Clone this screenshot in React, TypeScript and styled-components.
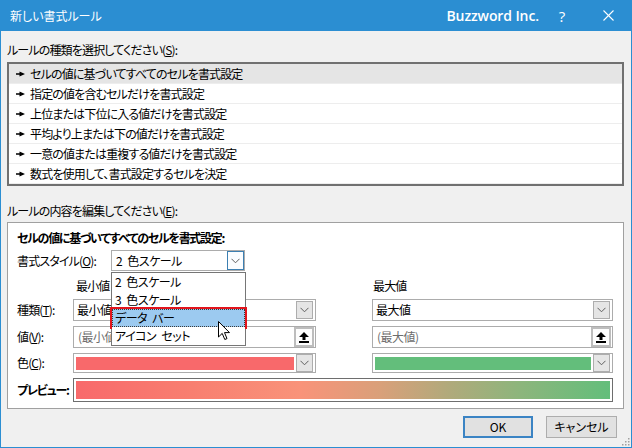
import React from "react";
import styled, { createGlobalStyle } from "styled-components";

const GlobalStyle = createGlobalStyle`
  html, body { margin: 0; padding: 0; background: #f0f0f0; }
  body {
    font-family: "Noto Sans CJK JP", "Noto Sans", sans-serif;
    font-size: 12px;
    letter-spacing: -0.85px;
    color: #000;
    font-feature-settings: "palt";
  }
  * { box-sizing: border-box; }
`;

const BLUE = "#2b8ed2";

const Window = styled.div`
  position: relative;
  width: 632px;
  height: 448px;
  background: #f0f0f0;
  border: 1px solid ${BLUE};
  border-top: none;
  display: flex;
  flex-direction: column;
  overflow: hidden;
`;

const TitleBar = styled.div`
  height: 31px;
  flex: none;
  background: ${BLUE};
  display: flex;
  align-items: center;
  padding-left: 9px;
  color: #fff;
`;

const TitleText = styled.span`
  font-size: 12px;
  line-height: 16px;
  letter-spacing: 0;
`;

const Brand = styled.span`
  margin-left: auto;
  font-family: "Open Sans", "Noto Sans", sans-serif;
  font-size: 14px;
  font-weight: 600;
  letter-spacing: -0.1px;
  line-height: 18px;
`;

const CaptionButton = styled.div`
  width: 46px;
  height: 31px;
  display: flex;
  align-items: center;
  justify-content: center;
  font-family: "Open Sans", "Noto Sans", sans-serif;
  font-size: 15px;
  letter-spacing: 0;
  color: #fff;
`;

const Body = styled.div`
  flex: 1;
  display: flex;
  flex-direction: column;
  padding: 11px 7px 0 6px;
`;

const SectionLabel = styled.div<{ $top?: number }>`
  height: 16px;
  line-height: 16px;
  margin-top: ${(p) => p.$top ?? 0}px;
`;

const ListBox = styled.div`
  margin-top: 4px;
  border: 2px solid #707070;
  background: #fff;
  display: flex;
  flex-direction: column;
`;

const ListItem = styled.div<{ $selected?: boolean }>`
  height: 20px;
  display: flex;
  align-items: center;
  gap: 5px;
  padding-left: 7px;
  border-bottom: 1px solid #ededed;
  background: ${(p) => (p.$selected ? "#e5e5e5" : "#fff")};
  line-height: 16px;
`;

const GroupBox = styled.div`
  margin-top: 3px;
  border: 1px solid #a0a0a0;
  background: #fff;
  padding: 7px 10px 6px 9px;
  display: flex;
  flex-direction: column;
`;

const Heading = styled.div`
  height: 16px;
  line-height: 16px;
  font-weight: 700;
  letter-spacing: -1.3px;
`;

const StyleRow = styled.div`
  margin-top: 4px;
  height: 21px;
  display: flex;
  align-items: center;
`;

const RowLabel = styled.span<{ $w: number; $bold?: boolean }>`
  width: ${(p) => p.$w}px;
  flex: none;
  line-height: 16px;
  white-space: nowrap;
  font-weight: ${(p) => (p.$bold ? 700 : 400)};
  letter-spacing: ${(p) => (p.$bold ? "-1.2px" : "inherit")};
`;

const FieldGrid = styled.div`
  margin-top: 7px;
  display: grid;
  grid-template-columns: 56px 243px 56px 241px;
  grid-template-rows: 16px 22px 22px 20px 24px;
  row-gap: 5px;
  align-items: center;
`;

const ColHead = styled.span<{ $col: number }>`
  grid-column: ${(p) => p.$col};
  padding-left: ${(p) => (p.$col === 2 ? 3 : 1)}px;
  line-height: 16px;
`;

const Combo = styled.div<{ $w?: number; $h: number }>`
  position: relative;
  width: ${(p) => (p.$w ? `${p.$w}px` : "auto")};
  height: ${(p) => p.$h}px;
  border: 1px solid #acacac;
  background: #fff;
  display: flex;
  align-items: center;
`;

const ComboText = styled.span<{ $muted?: boolean; $pad?: number }>`
  flex: 1;
  padding-left: ${(p) => p.$pad ?? 3}px;
  line-height: 16px;
  letter-spacing: -0.5px;
  word-spacing: 3px;
  color: ${(p) => (p.$muted ? "#6d6d6d" : "#000")};
  white-space: pre;
  overflow: hidden;
`;

const DropButton = styled.div<{ $focused?: boolean }>`
  flex: none;
  width: 17px;
  height: ${(p) => (p.$focused ? "100%" : "18px")};
  margin-right: ${(p) => (p.$focused ? 0 : 2)}px;
  border: 1px solid ${(p) => (p.$focused ? "#3c7fb1" : "#adadad")};
  background: ${(p) => (p.$focused ? "#fbfdff" : "#e5e5e5")};
  display: flex;
  align-items: center;
  justify-content: center;
`;

const RefButton = styled.div`
  flex: none;
  width: 20px;
  height: 20px;
  margin-right: 1px;
  border: 2px solid #bdbdbd;
  background: #fdfdfd;
  display: flex;
  align-items: center;
  justify-content: center;
`;

const ColorFill = styled.div<{ $color: string }>`
  flex: 1;
  height: 13px;
  margin: 0 2px 0 2px;
  background: ${(p) => p.$color};
`;

const PreviewBox = styled.div`
  grid-column: 2 / 5;
  height: 24px;
  border: 1px solid #6e6e6e;
  padding: 2px;
  background: #fff;
`;

const PreviewBar = styled.div`
  height: 100%;
  background: linear-gradient(
    to right,
    #f8696b 0%,
    #f87f70 22%,
    #f9937a 42%,
    #d9a07a 57%,
    #b0aa7b 70%,
    #8db57c 83%,
    #63be7b 100%
  );
`;

const DropList = styled.div`
  position: absolute;
  top: calc(100% + 2px);
  left: -1px;
  width: 135px;
  border: 1px solid #767676;
  background: #fff;
  z-index: 5;
  display: flex;
  flex-direction: column;
`;

const DropItem = styled.div<{ $hot?: boolean }>`
  position: relative;
  height: 18px;
  display: flex;
  align-items: center;
  padding-left: 2px;
  line-height: 16px;
  letter-spacing: -0.5px;
  word-spacing: 3px;
  white-space: pre;
  background: ${(p) => (p.$hot ? "#9ccaf0" : "#fff")};
  border: 1px ${(p) => (p.$hot ? "dotted #3a3a3a" : "solid transparent")};
  outline: ${(p) => (p.$hot ? "2px solid #e2141c" : "none")};
  outline-offset: 0;
`;

const Cursor = styled.svg`
  position: absolute;
  left: 106px;
  top: 48px;
  z-index: 6;
`;

const ButtonRow = styled.div`
  margin-top: 7px;
  display: flex;
  justify-content: flex-end;
  gap: 13px;
  padding-right: 7px;
`;

const DialogButton = styled.div<{ $default?: boolean; $w: number }>`
  width: ${(p) => p.$w}px;
  height: 22px;
  display: flex;
  align-items: center;
  justify-content: center;
  background: #e1e1e1;
  border: ${(p) => (p.$default ? "2px solid #3b84c4" : "1px solid #adadad")};
  line-height: 16px;
  letter-spacing: 0;
`;

const Grip = styled.svg`
  position: absolute;
  right: 1px;
  bottom: 1px;
`;

const Chevron = () => (
  <svg width="9" height="6" viewBox="0 0 9 6">
    <polyline points="0.5,0.8 4.5,4.8 8.5,0.8" fill="none" stroke="#5f5f5f" strokeWidth="1" />
  </svg>
);

const UpArrow = () => (
  <svg width="10" height="11" viewBox="0 0 10 11">
    <polygon points="5,0 10,5 6.5,5 6.5,8 3.5,8 3.5,5 0,5" fill="#000" />
    <rect x="0" y="9" width="10" height="2" fill="#000" />
  </svg>
);

const Pointer = () => (
  <svg width="9" height="6" viewBox="0 0 9 6">
    <polygon points="0,2.2 3.5,2.2 3.5,0.5 9,3 3.5,5.5 3.5,3.8 0,3.8" fill="#000" />
  </svg>
);

const rules = [
  "セルの値に基づいてすべてのセルを書式設定",
  "指定の値を含むセルだけを書式設定",
  "上位または下位に入る値だけを書式設定",
  "平均より上または下の値だけを書式設定",
  "一意の値または重複する値だけを書式設定",
  "数式を使用して、書式設定するセルを決定",
];

export default function App() {
  return (
    <>
      <GlobalStyle />
      <Window>
        <TitleBar>
          <TitleText>新しい書式ルール</TitleText>
          <Brand>Buzzword Inc.</Brand>
          <CaptionButton>?</CaptionButton>
          <CaptionButton>
            <svg width="11" height="11" viewBox="0 0 11 11">
              <line x1="0.5" y1="0.5" x2="10.5" y2="10.5" stroke="#fff" strokeWidth="1.1" />
              <line x1="10.5" y1="0.5" x2="0.5" y2="10.5" stroke="#fff" strokeWidth="1.1" />
            </svg>
          </CaptionButton>
        </TitleBar>
        <Body>
          <SectionLabel>
            ルールの種類を選択してください(<u>S</u>):
          </SectionLabel>
          <ListBox>
            {rules.map((r, i) => (
              <ListItem key={r} $selected={i === 0}>
                <Pointer />
                <span>{r}</span>
              </ListItem>
            ))}
          </ListBox>
          <SectionLabel $top={17}>
            ルールの内容を編集してください(<u>E</u>):
          </SectionLabel>
          <GroupBox>
            <Heading>セルの値に基づいてすべてのセルを書式設定:</Heading>
            <StyleRow>
              <RowLabel $w={94}>
                書式スタイル(<u>O</u>):
              </RowLabel>
              <Combo $w={134} $h={21}>
                <ComboText $pad={4}>2 色スケール</ComboText>
                <DropButton $focused>
                  <Chevron />
                </DropButton>
                <DropList>
                  <DropItem>2 色スケール</DropItem>
                  <DropItem>3 色スケール</DropItem>
                  <DropItem $hot>データ バー</DropItem>
                  <DropItem>アイコン セット</DropItem>
                  <Cursor width="13" height="20" viewBox="0 0 13 20">
                    <path
                      d="M0.5,0.5 L0.5,16 L4.2,12.4 L6.8,18.5 L9,17.6 L6.5,11.6 L11.5,11.6 Z"
                      fill="#fff"
                      stroke="#000"
                      strokeWidth="1"
                      strokeLinejoin="round"
                    />
                  </Cursor>
                </DropList>
              </Combo>
            </StyleRow>
            <FieldGrid>
              <ColHead $col={2}>最小値</ColHead>
              <ColHead $col={4}>最大値</ColHead>

              <RowLabel $w={56}>
                種類(<u>T</u>):
              </RowLabel>
              <Combo $h={22}>
                <ComboText>最小値</ComboText>
                <DropButton>
                  <Chevron />
                </DropButton>
              </Combo>
              <span />
              <Combo $h={22}>
                <ComboText>最大値</ComboText>
                <DropButton>
                  <Chevron />
                </DropButton>
              </Combo>

              <RowLabel $w={56}>
                値(<u>V</u>):
              </RowLabel>
              <Combo $h={22}>
                <ComboText $muted $pad={4}>(最小値)</ComboText>
                <RefButton>
                  <UpArrow />
                </RefButton>
              </Combo>
              <span />
              <Combo $h={22}>
                <ComboText $muted $pad={4}>(最大値)</ComboText>
                <RefButton>
                  <UpArrow />
                </RefButton>
              </Combo>

              <RowLabel $w={56}>
                色(<u>C</u>):
              </RowLabel>
              <Combo $h={20}>
                <ColorFill $color="#f8696b" />
                <DropButton>
                  <Chevron />
                </DropButton>
              </Combo>
              <span />
              <Combo $h={20}>
                <ColorFill $color="#63be7b" />
                <DropButton>
                  <Chevron />
                </DropButton>
              </Combo>

              <RowLabel $w={56} $bold>
                プレビュー:
              </RowLabel>
              <PreviewBox>
                <PreviewBar />
              </PreviewBox>
            </FieldGrid>
          </GroupBox>
          <ButtonRow>
            <DialogButton $default $w={70}>OK</DialogButton>
            <DialogButton $w={71}>キャンセル</DialogButton>
          </ButtonRow>
        </Body>
        <Grip width="10" height="10" viewBox="0 0 10 10">
          {[
            [8, 2],
            [8, 5],
            [5, 5],
            [8, 8],
            [5, 8],
            [2, 8],
          ].map(([x, y]) => (
            <rect key={`${x}-${y}`} x={x} y={y} width="1.5" height="1.5" fill="#a0a0a0" />
          ))}
        </Grip>
      </Window>
    </>
  );
}
